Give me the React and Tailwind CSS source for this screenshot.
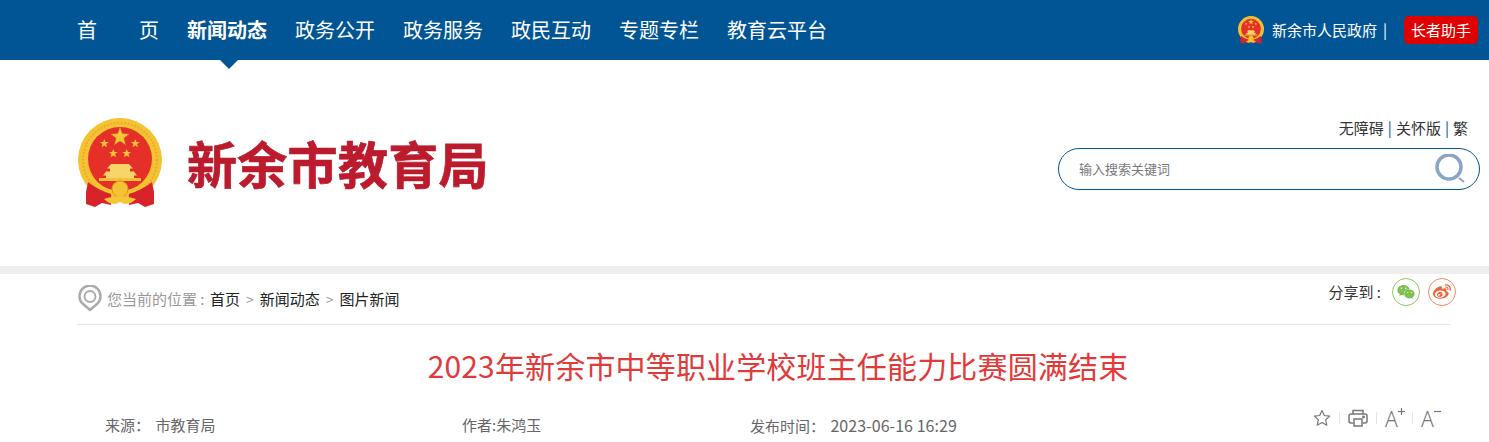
import React from 'react';
import { FaWeixin, FaWeibo } from 'react-icons/fa';

const cjk = 'font-["Microsoft_YaHei","Noto_Sans_CJK_SC",sans-serif]';

const navItems = ['新闻动态', '政务公开', '政务服务', '政民互动', '专题专栏', '教育云平台'];

// five-point star path around a centre
const starPath = (cx, cy, r) => {
  let d = '';
  for (let i = 0; i < 10; i++) {
    const rad = i % 2 === 0 ? r : r * 0.42;
    const a = (Math.PI / 5) * i - Math.PI / 2;
    d += `${i === 0 ? 'M' : 'L'}${(cx + rad * Math.cos(a)).toFixed(2)} ${(cy + rad * Math.sin(a)).toFixed(2)} `;
  }
  return d + 'Z';
};

const Emblem = ({ className }) => (
  <svg viewBox="0 0 84 90" className={className}>
    <circle cx="42" cy="42" r="42" fill="#f4c232" />
    <circle cx="42" cy="42" r="37" fill="none" stroke="#e8a828" strokeWidth="2" strokeDasharray="1.500 2" />
    <circle cx="42" cy="41" r="32" fill="#e5302a" />
    <path d={starPath(42, 19, 9.5)} fill="#f6c536" stroke="#c98a1c" strokeWidth=".4" />
    <path d={starPath(26.3, 25.5, 4.6)} fill="#f6c536" />
    <path d={starPath(57.3, 25.5, 4.6)} fill="#f6c536" />
    <path d={starPath(35.3, 35.5, 4.6)} fill="#f6c536" />
    <path d={starPath(48.7, 35.5, 4.6)} fill="#f6c536" />
    <path d="M33 46 h18 l4 4.500 h-3 v3 h4 l3 4 h-3 v3 h-28 v-3 h-3 l3 -4 h4 v-3 h-3z" fill="#f8d568" />
    <path d="M21 60 h42 v3 h-42z" fill="#f4c232" />
    <path d="M10 64 Q20 72 33 76 L33 87 L24 85 L17 89 L8 86 L8 74 Z" fill="#d8232a" />
    <path d="M74 64 Q64 72 51 76 L51 87 L60 85 L67 89 L76 86 L76 74 Z" fill="#d8232a" />
    <circle cx="42" cy="71" r="8" fill="#f4c232" stroke="#d99a1c" strokeWidth="1" />
    <path d="M26 81 Q42 75 58 81 Q50 89 42 84 Q34 89 26 81Z" fill="#f6c536" />
  </svg>
);

const Pin = () => (
  <svg viewBox="0 0 24 27" className="h-[27px] w-6" fill="none">
    <path d="M12 25 L4.500 18.500 A10.500 10.500 0 1 1 19.500 18.500 Z" stroke="#a9a9a9" strokeWidth="2.400" strokeLinejoin="round" />
    <circle cx="12" cy="11.500" r="5.500" stroke="#a9a9a9" strokeWidth="1.800" />
  </svg>
);

const Star = () => (
  <svg viewBox="0 0 18 18" className="h-[18px] w-[18px]" fill="none" stroke="#777" strokeWidth="1.200" strokeLinejoin="round">
    <path d="M9 1.500 l2.300 5 5.400 .6 -4 3.700 1.100 5.400 -4.800 -2.700 -4.800 2.700 1.100 -5.400 -4 -3.700 5.400 -.6z" />
  </svg>
);

const Printer = () => (
  <svg viewBox="0 0 20 18" className="h-[18px] w-5" fill="none" stroke="#777" strokeWidth="1.500">
    <path d="M5 5 V1.500 H15 V5" />
    <path d="M5 14 H3 A2 2 0 0 1 1 12 V7 A2 2 0 0 1 3 5 H17 A2 2 0 0 1 19 7 V12 A2 2 0 0 1 17 14 H15" />
    <rect x="6" y="10" width="8" height="7" />
    <circle cx="15.500" cy="8" r=".7" fill="#777" />
  </svg>
);

const FontSize = ({ plus }) => (
  <span className="relative block h-[18px] w-[19px] font-['Noto_Sans',sans-serif] text-[21px] font-light leading-[20px] text-[#777]">
    A
    <svg viewBox="0 0 7 7" className="absolute -right-px -top-px h-[7px] w-[7px]" stroke="#777" strokeWidth="1.200">
      <path d="M0 3.500 H7" />
      {plus && <path d="M3.500 0 V7" />}
    </svg>
  </span>
);

const Divider = () => <span className="h-[12px] w-px bg-[#e6e6e6]" />;

export default function App() {
  return (
    <div className={`h-[442px] overflow-hidden bg-white ${cjk}`}>
      {/* Top nav */}
      <div className="relative flex h-[60px] items-center justify-between bg-[#025594] pl-[77px] pr-[11px] text-white">
        <div className="flex items-center gap-[28px] text-[20px] leading-[60px]">
          <span className="flex w-[82px] justify-between">
            <span>首</span>
            <span>页</span>
          </span>
          {navItems.map((item, i) => (
            <span key={item} className={i === 0 ? 'font-bold' : ''}>{item}</span>
          ))}
        </div>
        <div className="flex items-center">
          <Emblem className="h-[28px] w-[26px]" />
          <span className="ml-[8px] text-[15px]">新余市人民政府</span>
          <span className="ml-[6px] text-[15px]">|</span>
          <span className="ml-[17px] h-7 w-[74px] rounded-[5px] bg-[#df0000] text-center text-[15px] leading-[28px]">长者助手</span>
        </div>
        <span className="absolute left-[220px] top-[60px] h-0 w-0 border-x-[9px] border-t-[9px] border-x-transparent border-t-[#025594]" />
      </div>

      {/* Header */}
      <div className="flex h-[206px] items-start justify-between pl-[78px] pr-[9px]">
        <div className="mt-[58px] flex items-start">
          <Emblem className="h-[90px] w-[84px]" />
          <h1 className="ml-[25px] mt-[11px] text-[50px] font-bold leading-[66px] tracking-[0.3px] text-[#bb1b2d] [-webkit-text-stroke:0.7px_#bb1b2d]">新余市教育局</h1>
        </div>
        <div className="mt-[58px] flex flex-col items-end">
          <div className="mr-[12px] flex text-[15px] leading-[20px] text-[#333]">
            <span>无障碍</span>
            <span className="mx-[4px] text-[#02558f]">|</span>
            <span>关怀版</span>
            <span className="mx-[4px] text-[#02558f]">|</span>
            <span>繁</span>
          </div>
          <div className="mt-[10px] flex h-[42px] w-[422px] items-center justify-between rounded-full border border-[#025594] pl-[20px] pr-[14px]">
            <span className="text-[13px] text-[#777]">输入搜索关键词</span>
            <svg viewBox="0 0 30 30" className="h-[30px] w-[30px]" fill="none" stroke="#8ba5c7">
              <circle cx="14" cy="13" r="12" strokeWidth="3.500" />
              <path d="M24 24 L29 28" strokeWidth="2" />
            </svg>
          </div>
        </div>
      </div>

      <div className="h-2 bg-[#eeeeee]" />

      <div className="ml-[77px] mr-[39px]">
        {/* Breadcrumb and share */}
        <div className="flex h-[51px] justify-between border-b border-[#e6e6e6]">
          <div className="ml-px mt-[12px] flex h-[27px] items-center text-[15px]">
            <span className="-mt-[3px]"><Pin /></span>
            <span className="ml-[5px] whitespace-pre text-[#999]">您当前的位置 : </span>
            <span className="ml-[2px] text-[#222]">首页</span>
            <span className="mx-[6px] text-[14px] text-[#999]">&gt;</span>
            <span className="text-[#222]">新闻动态</span>
            <span className="mx-[6px] text-[14px] text-[#999]">&gt;</span>
            <span className="text-[#222]">图片新闻</span>
          </div>
          <div className="-mr-[6px] mt-[4px] flex h-7 items-center text-[15px] text-[#333]">
            <span className="whitespace-pre">分享到 :</span>
            <span className="ml-[11px] flex h-7 w-7 items-center justify-center rounded-full border border-[#8ccb63] text-[#7fc04f]">
              <FaWeixin className="h-[18px] w-[18px]" />
            </span>
            <span className="ml-2 flex h-7 w-7 items-center justify-center rounded-full border border-[#f58a5e] text-[#f0643a]">
              <FaWeibo className="h-[18px] w-[18px]" />
            </span>
          </div>
        </div>

        {/* Article title */}
        <h2 className="mt-[15px] pl-[29px] text-center text-[30px] font-normal leading-[50px] tracking-[0.16px] text-[#e03a3a]">
          2023年新余市中等职业学校班主任能力比赛圆满结束
        </h2>

        {/* Meta row */}
        <div className="mt-[19px] flex items-start pl-[28px] text-[15px] text-[#666]">
          <span className="mt-[6px] w-[357px] whitespace-pre leading-5">来源： <span className="ml-[2px]">市教育局</span></span>
          <span className="mt-[6px] w-[288px] leading-5">作者:朱鸿玉</span>
          <span className="mt-[6px] whitespace-pre leading-5">发布时间： <span className="ml-[2px] text-[16px] tracking-[0.05px]">2023-06-16 16:29</span></span>
          <div className="ml-auto mr-[10px] flex items-center gap-[8px]">
            <Star />
            <Divider />
            <Printer />
            <Divider />
            <FontSize plus />
            <Divider />
            <FontSize />
          </div>
        </div>
      </div>
    </div>
  );
}
